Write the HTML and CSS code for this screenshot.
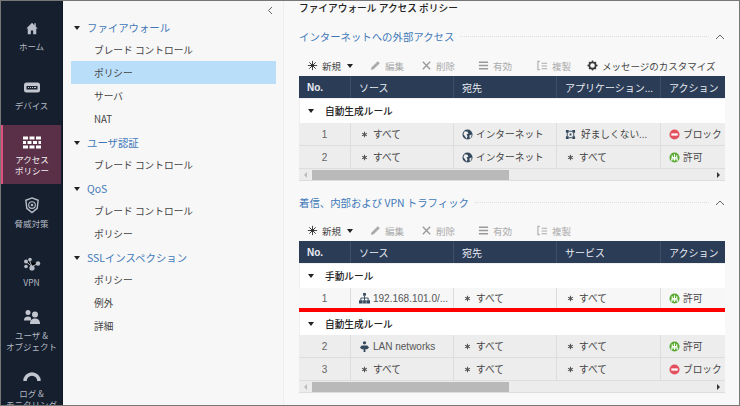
FILE: index.html
```html
<!DOCTYPE html>
<html lang="ja">
<head>
<meta charset="utf-8">
<title>ファイアウォール アクセス ポリシー</title>
<link rel="stylesheet" href="styles.css">
</head>
<body>
<svg class="defs" width="0" height="0">
  <symbol id="star" viewBox="0 0 10 10"><path d="M5 1v8M1.500 3l7 4M8.500 3l-7 4" stroke="#555" stroke-width="1.500" fill="none"/><circle cx="5" cy="5" r="1.800" fill="#555"/></symbol>
  <symbol id="globe" viewBox="0 0 12 12"><circle cx="6" cy="6" r="5.500" fill="#34495e"/><path d="M3 2.500l3 .5 1 2-2 1 1 2-1 2.500-2-3-1.500-2zM8 7l2.500-1-.5 3-1.500 1z" fill="#f0f0f0"/></symbol>
  <symbol id="allow" viewBox="0 0 12 12"><circle cx="6" cy="6" r="5.500" fill="#5aaa32"/><path d="M6 2.500v7M3.500 3.500v2.500h5V3.500M3 9.500V7.500h6v2" stroke="#fff" stroke-width="1.200" fill="none"/></symbol>
  <symbol id="block" viewBox="0 0 12 12"><circle cx="6" cy="6" r="5.500" fill="#e3505e"/><rect x="2.500" y="4.800" width="7" height="2.400" fill="#fff"/></symbol>
  <symbol id="new" viewBox="0 0 12 12"><path d="M6 1v10M1 6h10M2.500 2.500l7 7M9.500 2.500l-7 7" stroke="#333" stroke-width="1" fill="none"/><circle cx="6" cy="6" r="2" fill="#333"/></symbol>
  <symbol id="edit" viewBox="0 0 12 12"><path d="M1 11l.8-3L8.500 1.300l2.200 2.200L4 10.200z" fill="#aaa"/></symbol>
  <symbol id="del" viewBox="0 0 12 12"><path d="M2 2l8 8M10 2l-8 8" stroke="#999" stroke-width="1.500" fill="none"/></symbol>
  <symbol id="lines" viewBox="0 0 12 12"><path d="M1 2.500h10M1 6h10M1 9.500h10" stroke="#999" stroke-width="1.600" fill="none"/></symbol>
  <symbol id="copy" viewBox="0 0 12 12"><path d="M3 1.500H1v9h2M5 3.500h6M5 6.500h6M5 9.500h6" stroke="#aaa" stroke-width="1.200" fill="none"/></symbol>
  <symbol id="gear" viewBox="0 0 12 12"><circle cx="6" cy="6" r="3.500" fill="none" stroke="#3a3a3a" stroke-width="2"/><path d="M6 .5v2M6 9.500v2M.5 6h2M9.500 6h2M2.200 2.200l1.400 1.400M8.400 8.400l1.400 1.400M9.800 2.200L8.400 3.600M3.600 8.400L2.200 9.800" stroke="#3a3a3a" stroke-width="1.400"/></symbol>
</svg>
<div class="app">
  <nav class="rail">
    <a class="rail-item">
      <svg class="rail-icon" viewBox="0 0 18 18"><path d="M9 3L3 9h1.500v6h3.300v-4h2.400v4h3.300V9H15l-2-2V3.500h-1.500V5.500z" fill="#b9bec8"/></svg>
      <span>ホーム</span>
    </a>
    <a class="rail-item">
      <svg class="rail-icon" viewBox="0 0 18 16"><rect x="1" y="3" width="16" height="10" rx="2.500" fill="#c2c6ce"/><rect x="3.500" y="6.500" width="11" height="3.500" fill="#1a2433"/><path d="M5 8h1M7 8h1M9 8h1M11 8h2" stroke="#c2c6ce"/></svg>
      <span>デバイス</span>
    </a>
    <a class="rail-item active">
      <svg class="rail-icon wide" viewBox="0 0 20 14"><path fill="#fff" d="M1 1h5v3H1zM7.500 1h5v3h-5zM14 1h5v3h-5zM1 5.500h3v3H1zM5.500 5.500h4v3h-4zM11 5.500h4v3h-4zM16.500 5.500H19v3h-2.500zM1 10h5v3H1zM7.500 10h5v3h-5zM14 10h5v3h-5z"/></svg>
      <span>アクセス<br>ポリシー</span>
    </a>
    <a class="rail-item">
      <svg class="rail-icon" viewBox="0 0 16 18"><path d="M8 1l6.500 2.500L13.500 12 8 16.500 2.500 12 1.500 3.500z" fill="none" stroke="#b9bec8" stroke-width="1.500"/><circle cx="8" cy="8.500" r="3.500" fill="none" stroke="#b9bec8" stroke-width="1.200"/><circle cx="8" cy="8.500" r="1.300" fill="#b9bec8"/></svg>
      <span>脅威対策</span>
    </a>
    <a class="rail-item">
      <svg class="rail-icon" viewBox="0 0 18 16"><path d="M3 5l6 5 6-3M6 3l3 7" stroke="#b9bec8" stroke-width="1"/><circle cx="3" cy="5" r="2" fill="#b9bec8"/><circle cx="7" cy="3" r="1.800" fill="#b9bec8"/><circle cx="3" cy="10" r="1.800" fill="#b9bec8"/><circle cx="15" cy="7" r="2.200" fill="#b9bec8"/><circle cx="9" cy="11.500" r="2.600" fill="#b9bec8"/></svg>
      <span>VPN</span>
    </a>
    <a class="rail-item two">
      <svg class="rail-icon" viewBox="0 0 18 16"><circle cx="5" cy="4" r="2.500" fill="#c2c6ce"/><path d="M1 12c0-3 1.500-4 4-4s3 1 3 2v2z" fill="#c2c6ce"/><circle cx="12" cy="6" r="3" fill="#c2c6ce"/><path d="M7 15.500c0-4 2-5.500 5-5.500s5 1.500 5 5.500z" fill="#c2c6ce"/></svg>
      <span>ユーザ &amp;<br>オブジェクト</span>
    </a>
    <a class="rail-item two log">
      <svg class="rail-icon" viewBox="0 0 18 14"><path d="M2 12a7 7 0 0 1 14 0" fill="none" stroke="#c2c6ce" stroke-width="3.500"/></svg>
      <span>ログ &amp;<br>モニタリング</span>
    </a>
  </nav>

  <aside class="tree">
    <div class="collapse"><svg width="6" height="9" viewBox="0 0 6 9"><path d="M5 1L1.500 4.500 5 8" fill="none" stroke="#666"/></svg></div>
    <div class="tree-head"><i class="caret"></i>ファイアウォール</div>
    <div class="tree-leaf">ブレード コントロール</div>
    <div class="tree-leaf selected">ポリシー</div>
    <div class="tree-leaf">サーバ</div>
    <div class="tree-leaf">NAT</div>
    <div class="tree-head"><i class="caret"></i>ユーザ認証</div>
    <div class="tree-leaf">ブレード コントロール</div>
    <div class="tree-head"><i class="caret"></i>QoS</div>
    <div class="tree-leaf">ブレード コントロール</div>
    <div class="tree-leaf">ポリシー</div>
    <div class="tree-head"><i class="caret"></i>SSLインスペクション</div>
    <div class="tree-leaf">ポリシー</div>
    <div class="tree-leaf">例外</div>
    <div class="tree-leaf">詳細</div>
  </aside>

  <main class="main">
    <h1 class="title">ファイアウォール アクセス ポリシー</h1>

    <section class="section first">
      <h2 class="sec-head"><span>インターネットへの外部アクセス</span><i class="dots"></i><svg class="chev" width="10" height="6" viewBox="0 0 10 6"><path d="M1 5l4-4 4 4" fill="none" stroke="#666"/></svg></h2>
      <div class="toolbar">
        <span class="tool on t-new"><svg><use href="#new"/></svg>新規<i class="caret small"></i></span>
        <span class="tool off t-edit"><svg><use href="#edit"/></svg>編集</span>
        <span class="tool off t-del"><svg><use href="#del"/></svg>削除</span>
        <span class="tool off t-en"><svg><use href="#lines"/></svg>有効</span>
        <span class="tool off t-copy"><svg><use href="#copy"/></svg>複製</span>
        <span class="tool on"><svg><use href="#gear"/></svg>メッセージのカスタマイズ</span>
      </div>
      <div class="grid-box">
        <div class="row header"><b class="no">No.</b><b>ソース</b><b>宛先</b><b>アプリケーション...</b><b>アクション</b></div>
        <div class="group"><i class="caret"></i>自動生成ルール</div>
        <div class="row data auto"><span class="no">1</span><span><svg class="star"><use href="#star"/></svg>すべて</span><span><svg class="ic"><use href="#globe"/></svg>インターネット</span><span><svg class="ic apps" viewBox="0 0 12 12"><path d="M1 1h3v3H1zM8 1h3v3H8zM1 8h3v3H1zM8 8h3v3H8zM5 5h2v2H5z" fill="#34495e"/><path d="M4 2.500h4M4 9.500h4M2.500 4v4M9.500 4v4" stroke="#34495e"/></svg>好ましくない...</span><span><svg class="ic"><use href="#block"/></svg>ブロック</span></div>
        <div class="row data auto"><span class="no">2</span><span><svg class="star"><use href="#star"/></svg>すべて</span><span><svg class="ic"><use href="#globe"/></svg>インターネット</span><span><svg class="star"><use href="#star"/></svg>すべて</span><span><svg class="ic"><use href="#allow"/></svg>許可</span></div>
        <div class="scroll"><i class="arrow left"></i><i class="thumb"></i><i class="arrow right"></i></div>
      </div>
    </section>

    <section class="section second">
      <h2 class="sec-head"><span>着信、内部および VPN トラフィック</span><i class="dots"></i><svg class="chev" width="10" height="6" viewBox="0 0 10 6"><path d="M1 5l4-4 4 4" fill="none" stroke="#666"/></svg></h2>
      <div class="toolbar">
        <span class="tool on t-new"><svg><use href="#new"/></svg>新規<i class="caret small"></i></span>
        <span class="tool off t-edit"><svg><use href="#edit"/></svg>編集</span>
        <span class="tool off t-del"><svg><use href="#del"/></svg>削除</span>
        <span class="tool off t-en"><svg><use href="#lines"/></svg>有効</span>
        <span class="tool off t-copy"><svg><use href="#copy"/></svg>複製</span>
      </div>
      <div class="grid-box">
        <div class="row header"><b class="no">No.</b><b>ソース</b><b>宛先</b><b>サービス</b><b>アクション</b></div>
        <div class="group"><i class="caret"></i>手動ルール</div>
        <div class="row data manual"><span class="no">1</span><span><svg class="ic" viewBox="0 0 12 12"><path d="M4.500 0h3v3h-3zM0 8h4v3.500H0zM8 8h4v3.500H8zM4.500 8h3v3.500h-3z" fill="#34495e"/><path d="M6 3v5M2 8V5.500h8V8" stroke="#34495e" fill="none"/></svg><em class="addr">192.168.101.0/...</em></span><span><svg class="star"><use href="#star"/></svg>すべて</span><span><svg class="star"><use href="#star"/></svg>すべて</span><span><svg class="ic"><use href="#allow"/></svg>許可</span></div>
        <div class="redline"></div>
        <div class="group"><i class="caret"></i>自動生成ルール</div>
        <div class="row data auto"><span class="no">2</span><span><svg class="ic" viewBox="0 0 12 12"><circle cx="6" cy="2" r="1.800" fill="#34495e"/><path d="M3 5h6l2 2-2 2H7v3H5V9H3L1 7z" fill="#34495e"/></svg><em class="addr">LAN networks</em></span><span><svg class="star"><use href="#star"/></svg>すべて</span><span><svg class="star"><use href="#star"/></svg>すべて</span><span><svg class="ic"><use href="#allow"/></svg>許可</span></div>
        <div class="row data auto"><span class="no">3</span><span><svg class="star"><use href="#star"/></svg>すべて</span><span><svg class="star"><use href="#star"/></svg>すべて</span><span><svg class="star"><use href="#star"/></svg>すべて</span><span><svg class="ic"><use href="#block"/></svg>ブロック</span></div>
        <div class="scroll"><i class="arrow left"></i><i class="thumb"></i><i class="arrow right"></i></div>
      </div>
    </section>
  </main>
</div>
</body>
</html>
```
FILE: styles.css
```css
* { box-sizing: border-box; }
html, body { margin: 0; height: 406px; overflow: hidden; background: #f8f8f8; }
body { font-family: "Noto Sans CJK JP", "Noto Sans", sans-serif; font-size: 9.7px; color: #444; }
.defs { position: absolute; }
i { font-style: normal; display: block; }

.app { display: flex; height: 406px; border: 1px solid #777; overflow: hidden; }

.rail { width: 62px; flex: none; background: #151f2e; padding-top: 6px; border-right: 1px solid #0e1622; }
.rail-item { height: 59px; padding-top: 13px; display: flex; flex-direction: column; align-items: center; color: #b4b9c2; font-size: 8.5px; line-height: 11px; text-align: center; white-space: nowrap; }
.rail-item span { margin-top: 4px; }
.rail-icon { width: 18px; height: 17px; flex: none; }
.rail-icon.wide { width: 20px; height: 15px; }
.rail-item.active { background: #5a3049; border-left: 2px solid #e0507c; color: #f4f0f2; margin-right: 1px; padding-top: 10px; }
.rail-item.two { padding-top: 6px; }
.rail-item.two span { margin-top: 5px; }
.rail-item.log { padding-top: 8px; }
.rail-item.log .rail-icon { height: 14px; }
.rail-item.log span { margin-top: 5px; }

.tree { width: 221px; flex: none; background: #f7f7f7; padding: 14px 8px 0 8px; position: relative; border-right: 1px solid #eee; }
.collapse { position: absolute; top: 3px; right: 10px; }
.tree-head { height: 23px; display: flex; align-items: center; color: #3f78b8; font-size: 10.4px; padding: 2px 0 0 3px; }
.tree-head .caret { margin-right: 7px; }
.tree-leaf { height: 23px; line-height: 25px; padding-left: 23px; color: #444; width: 205px; }
.tree-leaf.selected { background: #b9defa; }
.caret { width: 0; height: 0; border: 3.500px solid transparent; border-top: 4px solid #222; border-bottom: 0; flex: none; }

.main { flex: 1; min-width: 0; padding: 0 14px 0 15px; }
.title { margin: 0; font-size: 9.7px; font-weight: 500; color: #222; line-height: 15px; }
.section.first { padding-top: 12px; }
.section.second { padding-top: 13px; }
.sec-head { margin: 0; height: 17px; display: flex; align-items: center; font-size: 10.4px; font-weight: 400; color: #3f78b8; }
.dots { flex: 1; border-top: 1px dotted #ddd; margin: 0 6px; }
.chev { flex: none; }

.toolbar { display: flex; align-items: center; height: 21px; margin-top: 10px; padding-left: 8px; font-size: 9.5px; white-space: nowrap; }
.second .toolbar { margin-top: 9px; }
.tool { display: inline-flex; align-items: center; }
.tool svg { width: 11px; height: 11px; margin-right: 4px; }
.tool.on { color: #444; }
.tool.off { color: #aaa; }
.t-new { width: 63px; }
.t-new .caret { margin-left: 6px; }
.t-edit { width: 51px; }
.t-del { width: 57px; }
.t-en { width: 59px; }
.t-copy { width: 50px; }

.grid-box { width: 426px; overflow: hidden; }
.row { display: grid; grid-template-columns: 52px 103px 103px 104px 64px; white-space: nowrap; }
.row > * { overflow: hidden; font-weight: 400; font-style: normal; display: flex; align-items: center; padding-left: 8px; }
.row.header { height: 23px; background: #2b3c57; color: #e8ecf2; font-size: 10px; border-bottom: 1px solid #f0f0f0; }
.row.header > * { border-right: 1px solid #3d4e69; }
.row.header > *:last-child { border-right: 0; }
.group { height: 24px; background: #fff; display: flex; align-items: center; color: #222; font-weight: 500; font-size: 9.7px; padding-left: 8px; border-left: 1px solid #eee; }
.redline + .group { height: 23px; }
.group .caret { margin-right: 11px; }
.row.data { height: 23px; border-bottom: 1px solid #ddd; }
.row.data > * { border-right: 1px solid #ddd; }
.row.data > *:last-child { border-right: 0; }
.row.auto { background: #ededed; }
.row.manual { height: 20px; background: #f7f7f7; border-bottom: 0; }
.row .no { justify-content: center; padding-left: 0; font-family: "Liberation Sans", sans-serif; color: #666; font-size: 10px; }
.row.header .no { justify-content: flex-start; padding-left: 8px; color: #e8ecf2; font-weight: 700; }
.star { width: 7px; height: 7px; margin-right: 5px; margin-left: 2px; flex: none; }
.ic { width: 11px; height: 11px; margin-right: 3px; flex: none; }
.apps { margin-right: 5px; }
.addr { font-style: normal; font-family: "Liberation Sans", sans-serif; font-size: 10px; color: #555; }
.redline { height: 4px; background: #f00; margin-right: -1px; }
.scroll { height: 12px; background: #ececec; display: flex; align-items: center; border-bottom: 1px solid #ddd; padding-left: 5px; }
.thumb { width: 197px; height: 10px; background: #b9b9b9; margin-left: 5px; }
.arrow { width: 0; height: 0; border: 3px solid transparent; }
.arrow.left { border-right: 3px solid #bbb; border-left: 0; }
.arrow.right { border-left: 3px solid #333; border-right: 0; margin-left: auto; margin-right: 5px; }
```
